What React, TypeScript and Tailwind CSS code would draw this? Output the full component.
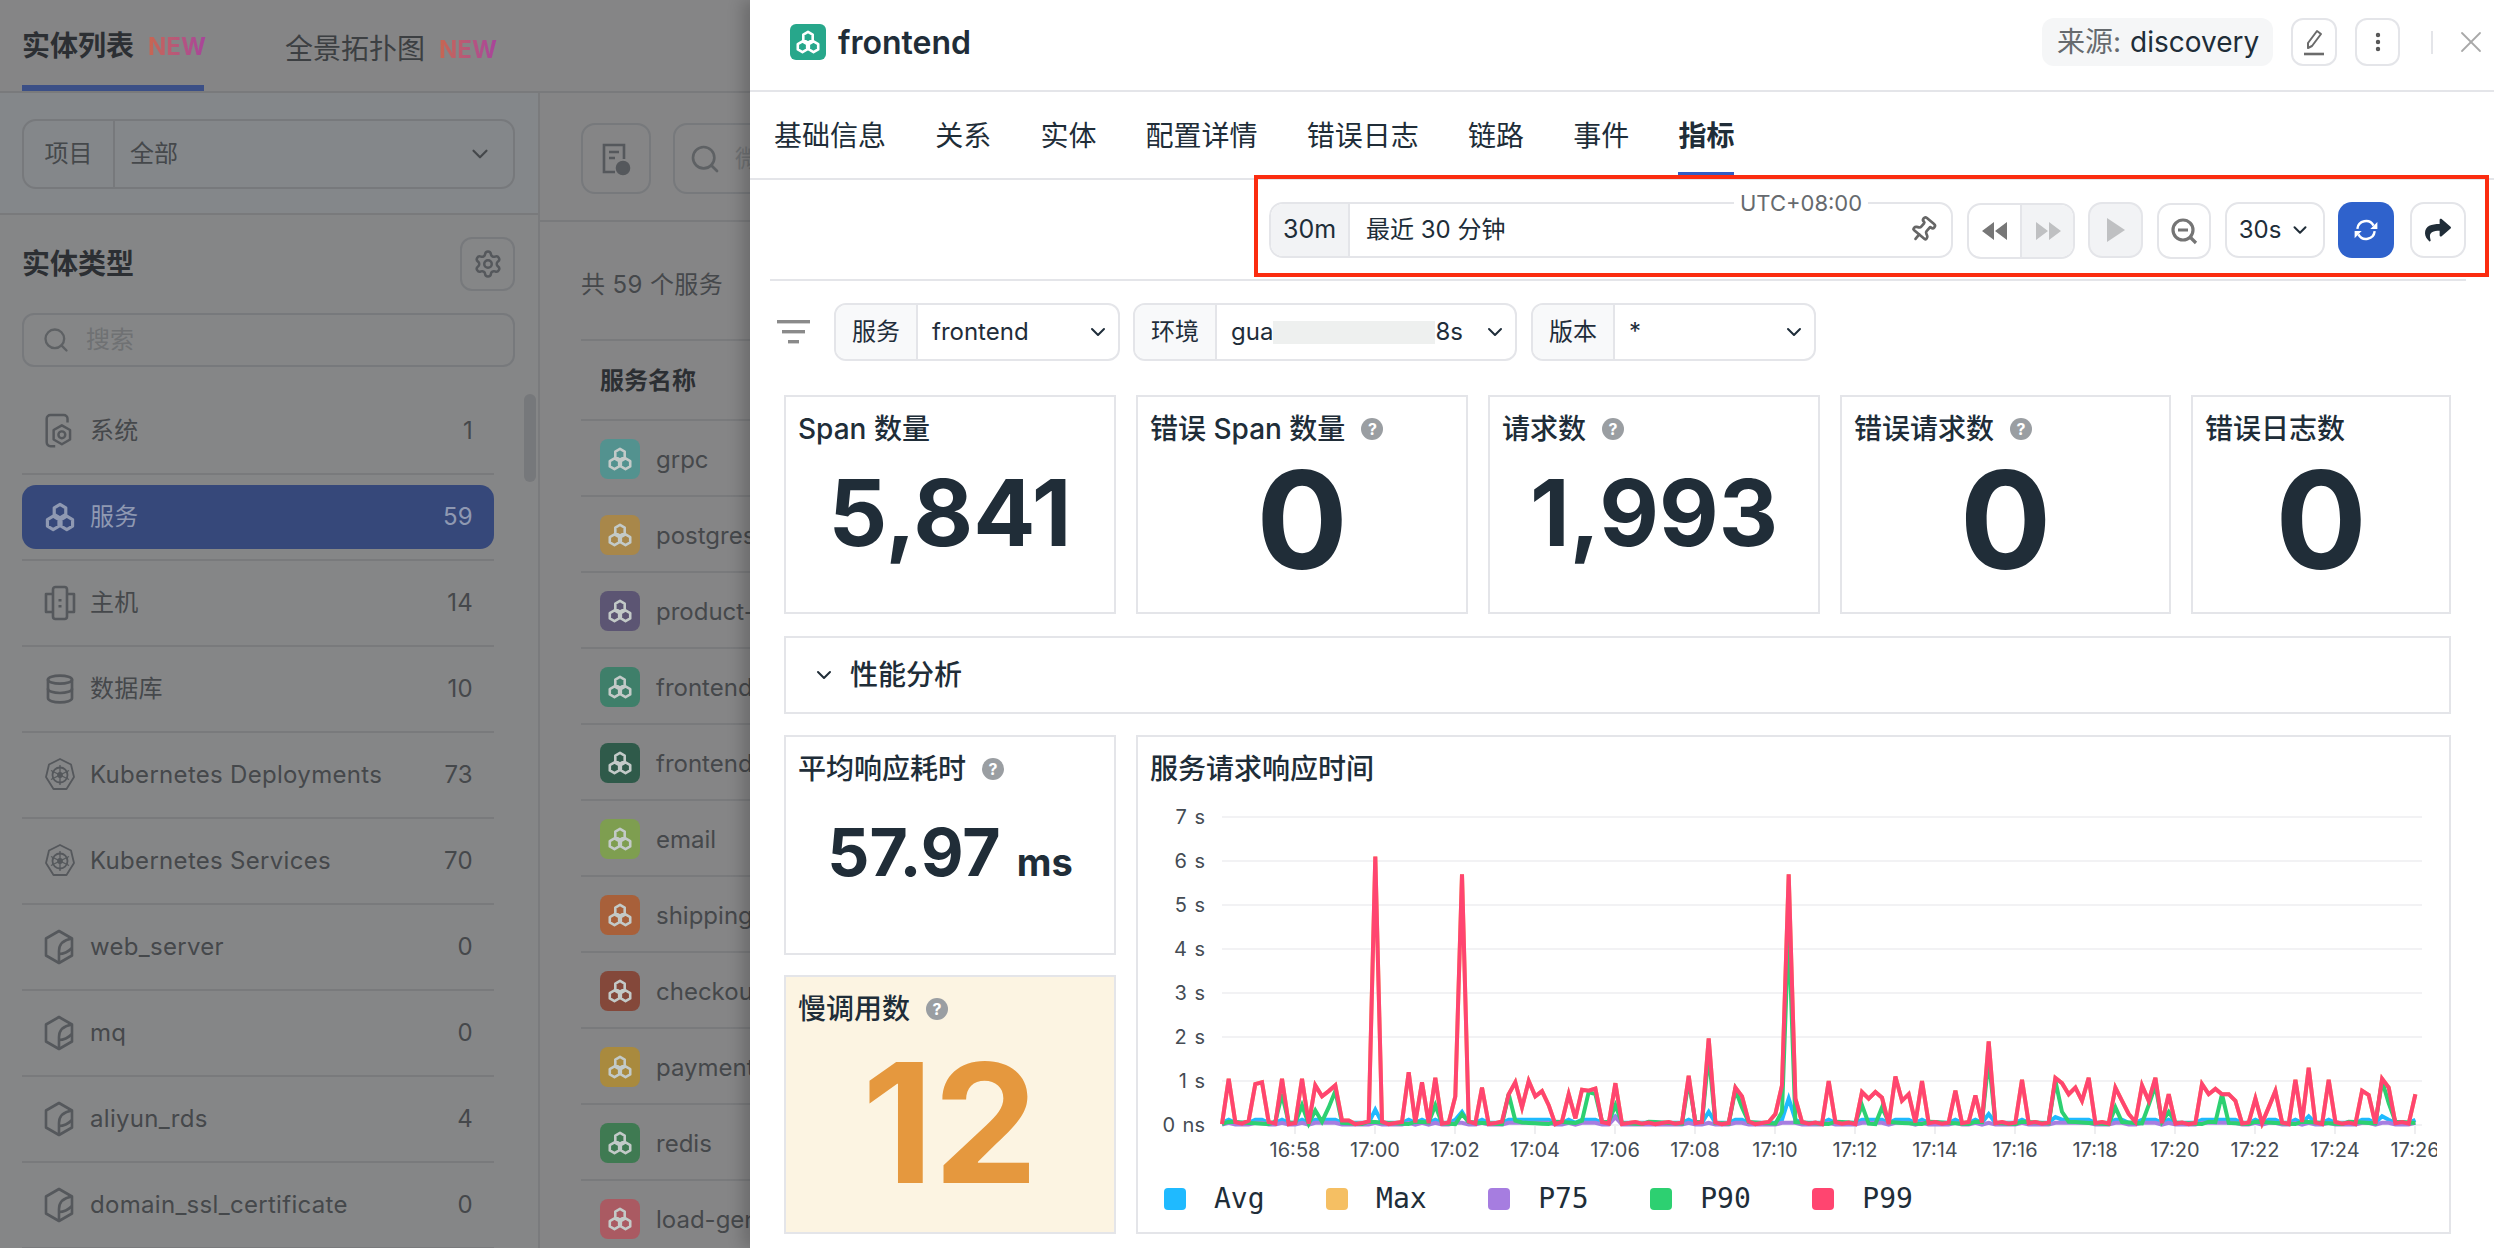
import { ChevronDown, Database, EllipsisVertical, Pin, Search, Settings, X } from "lucide-react";
import { FaShare } from "react-icons/fa";

const hex = (cx: number, cy: number, r: number) =>
    [0, 1, 2, 3, 4, 5]
        .map((i) => {
            const a = (Math.PI / 3) * i - Math.PI / 2;
            return `${(cx + r * Math.cos(a)).toFixed(2)},${(cy + r * Math.sin(a)).toFixed(2)}`;
        })
        .join(" ");

const ServiceGlyph = ({ className }: { className?: string }) => (
    <svg viewBox="0 0 24 24" fill="none" stroke="currentColor" strokeWidth="2.4" strokeLinejoin="round" className={className}>
        <polygon points={hex(12, 7.6, 5)} />
        <polygon points={hex(6.9, 16.4, 5)} />
        <polygon points={hex(17.1, 16.4, 5)} />
    </svg>
);

const SystemGlyph = () => (
    <svg viewBox="0 0 30 38" fill="none" stroke="currentColor" strokeWidth="2.6" strokeLinejoin="round" className="w-[30px] h-[36px]">
        <path d="M11 35H6a4 4 0 0 1-4-4V6a4 4 0 0 1 4-4h14a4 4 0 0 1 4 4v4" />
        <polygon points={hex(18, 23, 10)} />
        <circle cx="18" cy="23" r="3.6" />
    </svg>
);

const HostGlyph = () => (
    <svg viewBox="0 0 32 36" fill="none" stroke="currentColor" strokeWidth="2.6" strokeLinejoin="round" className="w-[32px] h-[36px]">
        <rect x="9" y="2" width="14" height="32" rx="2.5" />
        <path d="M9 9H2v18h7M23 9h7v18h-7" />
        <path d="M16 14v2.4M16 20v2.4" strokeWidth="3" />
    </svg>
);

const K8sGlyph = () => (
    <svg viewBox="0 0 32 36" fill="none" stroke="currentColor" strokeWidth="1.8" strokeLinejoin="round" className="w-[32px] h-[36px]">
        <polygon points="16,2 27,7.5 30,20 22.5,32 9.5,32 2,20 5,7.5" />
        <circle cx="16" cy="18" r="7.5" />
        <circle cx="16" cy="18" r="2" />
        <path d="M16 8v20M7 13.5l18 9M25 13.5l-18 9" strokeWidth="1.3" />
    </svg>
);

const CubeGlyph = () => (
    <svg viewBox="0 0 30 36" fill="none" stroke="currentColor" strokeWidth="2.6" strokeLinejoin="round" className="w-[30px] h-[36px]">
        <polygon points="15,2 28,9.5 28,26.5 15,34 2,26.5 2,9.5" />
        <path d="M28 9.5C19 11 15 16 15 22v12" />
        <path d="M15 25c5 0 9-2 13-6" />
    </svg>
);

const entityTypes: { name: string; count: number; icon: React.ReactNode; active?: boolean }[] = [
    { name: "系统", count: 1, icon: <SystemGlyph /> },
    { name: "服务", count: 59, icon: <ServiceGlyph className="w-[32px] h-[32px]" />, active: true },
    { name: "主机", count: 14, icon: <HostGlyph /> },
    { name: "数据库", count: 10, icon: <Database className="w-[32px] h-[32px]" strokeWidth={2} /> },
    { name: "Kubernetes Deployments", count: 73, icon: <K8sGlyph /> },
    { name: "Kubernetes Services", count: 70, icon: <K8sGlyph /> },
    { name: "web_server", count: 0, icon: <CubeGlyph /> },
    { name: "mq", count: 0, icon: <CubeGlyph /> },
    { name: "aliyun_rds", count: 4, icon: <CubeGlyph /> },
    { name: "domain_ssl_certificate", count: 0, icon: <CubeGlyph /> },
];

const services = [
    { name: "grpc", bg: "bg-[#53928f]" },
    { name: "postgres", bg: "bg-[#a8874a]" },
    { name: "product-catalog", bg: "bg-[#5c5573]" },
    { name: "frontend", bg: "bg-[#3f7f6a]" },
    { name: "frontend-web", bg: "bg-[#2f5a4a]" },
    { name: "email", bg: "bg-[#7e9e50]" },
    { name: "shipping", bg: "bg-[#a8603a]" },
    { name: "checkout", bg: "bg-[#84483a]" },
    { name: "payment", bg: "bg-[#a98a3e]" },
    { name: "redis", bg: "bg-[#3f7a52]" },
    { name: "load-generator", bg: "bg-[#aa5a62]" },
];

// chart data: 10s step, sparse, everything else sits near zero
const p99Peaks: Record<number, number> = {
    1: 1.05, 4: 0.1, 5: 0.93, 6: 0.97, 9: 1.05, 12: 1.05, 14: 0.9, 15: 0.65, 16: 0.77, 17: 0.9, 18: 0.1, 19: 0.1, 22: 0.08, 23: 6.1, 24: 0.08,
    28: 1.2, 30: 0.97, 32: 1.07, 35: 0.65, 36: 5.7, 37: 0.08, 39: 0.85, 42: 0.08, 43: 0.7, 44: 0.97, 45: 0.4, 46: 1, 47: 0.65, 48: 0.77, 49: 0.45,
    51: 0.08, 52: 0.7, 53: 0.15, 54: 0.8, 55: 0.78, 56: 0.83, 59: 0.95, 70: 1.12, 73: 1.97, 77: 0.85, 78: 0.65, 79: 0.08, 83: 0.25, 84: 0.9, 85: 5.7, 86: 0.6,
    91: 1, 96: 0.75, 97: 0.6, 98: 0.75, 99: 0.62, 101: 1.1, 102: 0.55, 103: 0.7, 105: 1, 110: 0.78, 113: 0.67, 115: 1.9, 120: 1.03,
    125: 1.07, 126: 0.95, 127: 0.7, 128: 0.85, 129: 0.55, 130: 1.07, 134: 0.85, 135: 0.55, 136: 0.25, 138: 0.9, 139: 0.55, 140: 1.07, 142: 0.7,
    147: 0.93, 148: 0.7, 149: 0.82, 150: 0.7, 151: 0.7, 152: 0.55, 155: 0.6, 157: 0.4, 158: 0.77, 161: 1.03, 163: 1.3, 166: 1.03,
    171: 0.78, 172: 0.68, 174: 1.05, 175: 0.85, 179: 0.7,
};
const p90Peaks: Record<number, number> = {
    9: 0.7, 12: 0.45, 14: 0.33, 16: 0.4, 17: 0.77, 32: 0.45, 36: 0.25, 43: 0.7, 44: 0.1, 54: 0.1, 55: 0.75, 56: 0.7, 59: 0.45,
    70: 1, 73: 1.6, 77: 0.8, 78: 0.4, 84: 0.3, 85: 4.5, 96: 0.45, 99: 0.4, 115: 1.5, 125: 1, 126: 0.3, 134: 0.4, 139: 0.45, 140: 0.9, 142: 0.3, 150: 0.7, 174: 1, 175: 0.5,
};
const avgPeaks: Record<number, number> = { 23: 0.35, 36: 0.3, 59: 0.2, 73: 0.3, 85: 0.6, 115: 0.25, 125: 0.18, 163: 0.2, 174: 0.2 };

const pointCount = Array.from({ length: 180 }, (_, i) => i);
const avgSeries = pointCount.map((i) => avgPeaks[i] ?? ((p99Peaks[i] ?? 0) > 0.3 ? 0.12 : 0.05));
const p75Series = pointCount.map((i) => (i === 59 ? 0.18 : (p99Peaks[i] ?? 0) > 0.3 ? 0.05 : 0.01));
const p90Series = pointCount.map((i) => p90Peaks[i] ?? 0.02 + ((i * 13) % 7) * 0.009);
const p99Series = pointCount.map((i) => p99Peaks[i] ?? 0.02 + ((i * 7) % 5) * 0.012);

const toPoints = (values: number[]) =>
    values.map((v, i) => `${(84 + i * 6.667).toFixed(1)},${(326 - v * 44).toFixed(1)}`).join(" ");

const xTicks = ["16:58", "17:00", "17:02", "17:04", "17:06", "17:08", "17:10", "17:12", "17:14", "17:16", "17:18", "17:20", "17:22", "17:24", "17:26"];
const yTicks = ["0 ns", "1 s", "2 s", "3 s", "4 s", "5 s", "6 s", "7 s"];

const legend = [
    { name: "Avg", color: "bg-[#1fbaff]" },
    { name: "Max", color: "bg-[#f5bf63]" },
    { name: "P75", color: "bg-[#a67de0]" },
    { name: "P90", color: "bg-[#2dd071]" },
    { name: "P99", color: "bg-[#ff4570]" },
];

const Help = () => (
    <span className="inline-flex items-center justify-center w-[22px] h-[22px] rounded-full bg-[#9a9ea2] text-white text-[16px] font-bold leading-none">?</span>
);

const ResponseChart = () => (
    <svg width="1299" height="370" className="block">
        {yTicks.map((t, i) => (
            <g key={t}>
                <line x1="84" x2="1284" y1={326 - i * 44} y2={326 - i * 44} stroke="#f2f2f4" strokeWidth="2" />
                <text x="67" y={326 - i * 44 + 7} textAnchor="end" fontSize="20" fill="#454c54" wordSpacing="2">{t}</text>
            </g>
        ))}
        {xTicks.map((t, i) => (
            <g key={t}>
                <line x1={157 + i * 80} x2={157 + i * 80} y1="327" y2="335" stroke="#eeeef0" strokeWidth="2" />
                <text x={157 + i * 80} y="358" textAnchor="middle" fontSize="20" fill="#454c54">{t}</text>
            </g>
        ))}
        <polyline points={toPoints(avgSeries)} fill="none" stroke="#1fbaff" strokeWidth="4" />
        <polyline points={toPoints(p99Series)} fill="none" stroke="#f5bf63" strokeWidth="4" />
        <polyline points={toPoints(p75Series)} fill="none" stroke="#a67de0" strokeWidth="4" />
        <polyline points={toPoints(p90Series)} fill="none" stroke="#2dd071" strokeWidth="4" />
        <polyline points={toPoints(p99Series)} fill="none" stroke="#ff4570" strokeWidth="4" />
    </svg>
);

const Select = ({ label, className, children }: { label: string; className: string; children: React.ReactNode }) => (
    <div className={`flex h-[58px] border-2 border-[#e4e5e9] rounded-[12px] overflow-hidden text-[24px] text-[#1f2d3a] ${className}`}>
        <div className="w-[82px] shrink-0 flex items-center justify-center bg-[#f8f9fa] border-r-2 border-[#e4e5e9]">{label}</div>
        <div className="flex-1 flex items-center justify-between pl-[14px] pr-[8px]">
            {children}
            <ChevronDown className="w-[24px] h-[24px]" strokeWidth={2} />
        </div>
    </div>
);

const StatCard = ({ title, value, help, size = "big" }: { title: string; value: string; help?: boolean; size?: "big" | "mid" }) => (
    <div className="h-[219px] border-2 border-[#e4e5e9] flex flex-col text-[#202d38]">
        <div className="flex items-center gap-[16px] pt-[13px] pl-[12px] text-[28px] leading-[38px] font-medium">
            {title}
            {help && <Help />}
        </div>
        {size === "big" ? (
            <div className="flex-1 flex items-center justify-center pb-[21px] text-[136px] leading-none font-bold">{value}</div>
        ) : (
            <div className="flex-1 flex items-center justify-center pb-[35px] text-[92px] leading-none font-bold">{value}</div>
        )}
    </div>
);

const IconBox = ({ className, children }: { className: string; children: React.ReactNode }) => (
    <div className={`h-[56px] flex items-center justify-center border-2 border-[#e4e5e9] rounded-[14px] ${className}`}>{children}</div>
);

const Backdrop = () => (
    <div className="w-[2494px] h-[1248px] bg-[#858586] text-[#45484b]">
        <div className="h-[93px] border-b-2 border-[#797a7c] flex">
            <div className="w-[182px] ml-[22px] flex items-center gap-[14px] border-b-[6px] border-[#3b4f86] pt-[6px] text-[28px] font-semibold text-[#2c2f33] whitespace-nowrap">
                实体列表
                <span className="pt-[2px] bg-linear-to-r from-[#c8664f] to-[#a8439b] bg-clip-text text-transparent text-[24px] font-bold">NEW</span>
            </div>
            <div className="ml-[81px] flex items-center gap-[14px] pt-[6px] text-[28px] whitespace-nowrap text-[#3c3f42]">
                全景拓扑图
                <span className="pt-[2px] bg-linear-to-r from-[#c8664f] to-[#a8439b] bg-clip-text text-transparent text-[24px] font-bold">NEW</span>
            </div>
        </div>
        <div className="flex h-[1155px]">
            <div className="relative w-[540px] shrink-0 border-r-2 border-[#7a7b7d] bg-[#84878a]">
                <div className="h-[122px] border-b-2 border-[#797a7c] pt-[26px] pl-[22px] pr-[23px]">
                    <div className="flex h-[70px] border-2 border-[#77797c] rounded-[14px] text-[24px]">
                        <div className="w-[91px] flex items-center justify-center border-r-2 border-[#77797c]">项目</div>
                        <div className="flex-1 flex items-center justify-between pl-[15px] pr-[20px]">
                            全部
                            <ChevronDown className="w-[26px] h-[26px]" strokeWidth={2} />
                        </div>
                    </div>
                </div>
                <div className="pl-[22px] pr-[23px] pt-[22px] bg-[#858687] h-[1033px] overflow-hidden">
                    <div className="flex items-center justify-between h-[54px]">
                        <span className="text-[28px] font-semibold text-[#2c2f33]">实体类型</span>
                        <div className="w-[55px] h-[54px] flex items-center justify-center border-2 border-[#77797c] rounded-[12px]">
                            <Settings className="w-[30px] h-[30px] text-[#55585c]" strokeWidth={2} />
                        </div>
                    </div>
                    <div className="mt-[22px] h-[54px] flex items-center gap-[16px] pl-[18px] border-2 border-[#77797c] rounded-[12px] text-[24px] text-[#6f7173]">
                        <Search className="w-[28px] h-[28px] text-[#5e6164]" strokeWidth={2} />
                        搜索
                    </div>
                    <div className="mt-[22px] w-[472px]">
                        {entityTypes.map((t) => (
                            <div key={t.name} className="h-[86px] border-b-2 border-[#797a7c] flex items-center">
                                <div className={`w-full h-[64px] flex items-center rounded-[14px] pl-[22px] pr-[21px] text-[24px] tracking-[0.3px] ${t.active ? "bg-[#36487a] text-[#8f99b2]" : "text-[#45484b]"}`}>
                                    <span className={`w-[46px] flex ${t.active ? "text-[#8f99b2]" : "text-[#55585c]"}`}>{t.icon}</span>
                                    <span className="flex-1">{t.name}</span>
                                    <span>{t.count}</span>
                                </div>
                            </div>
                        ))}
                    </div>
                </div>
                <div className="absolute left-[524px] top-[301px] w-[12px] h-[88px] rounded-full bg-[#76787b]" />
            </div>
            <div className="w-[211px] overflow-hidden">
                <div className="h-[129px] border-b-2 border-[#797a7c] pt-[30px] pl-[41px] flex gap-[22px]">
                    <div className="w-[70px] h-[71px] shrink-0 flex items-center justify-center border-2 border-[#77797c] rounded-[14px]">
                        <svg viewBox="0 0 30 34" fill="none" stroke="#55585c" strokeWidth="2.6" className="w-[30px] h-[34px]">
                            <path d="M14 30H3V3h20v14" />
                            <path d="M8 10h10M8 16h6" />
                            <circle cx="22" cy="26" r="6" fill="#55585c" />
                        </svg>
                    </div>
                    <div className="w-[400px] h-[71px] shrink-0 flex items-center gap-[14px] pl-[14px] border-2 border-[#77797c] rounded-[14px] text-[24px] text-[#6f7173] whitespace-nowrap">
                        <Search className="w-[32px] h-[32px] text-[#5e6164]" strokeWidth={2} />
                        微服务名称
                    </div>
                </div>
                <div className="pl-[41px] w-[500px]">
                    <div className="h-[119px] border-b-2 border-[#797a7c] flex items-center pt-[9px] text-[24px] tracking-[0.4px]">共 59 个服务</div>
                    <div className="h-[80px] border-b-2 border-[#797a7c] flex items-center pl-[19px] pt-[2px] text-[24px] font-semibold text-[#2c2f33]">服务名称</div>
                    {services.map((s) => (
                        <div key={s.name} className="h-[76px] border-b-2 border-[#797a7c] flex items-center gap-[16px] pl-[19px] pt-[2px] text-[24px] whitespace-nowrap">
                            <span className={`w-[40px] h-[40px] rounded-[8px] flex items-center justify-center text-[#c3cac8] ${s.bg}`}>
                                <ServiceGlyph className="w-[26px] h-[26px]" />
                            </span>
                            <span className="pt-[2px]">{s.name}</span>
                        </div>
                    ))}
                </div>
            </div>
        </div>
    </div>
);

const tabs = ["基础信息", "关系", "实体", "配置详情", "错误日志", "链路", "事件", "指标"];

const Drawer = () => (
    <div className="absolute left-[750px] top-0 w-[1744px] h-[1248px] bg-white overflow-hidden shadow-[-8px_0_14px_rgba(0,0,0,0.18)] text-[#202d38]">
        <div className="h-[92px] pb-[6px] border-b-2 border-[#e4e5e9] flex items-center pl-[40px] pr-[5px]">
            <span className="w-[36px] h-[36px] rounded-[6px] bg-[#27a78b] text-white flex items-center justify-center">
                <ServiceGlyph className="w-[26px] h-[26px]" />
            </span>
            <span className="ml-[12px] pt-[2px] text-[32px] font-semibold">frontend</span>
            <div className="ml-auto w-[231px] h-[48px] rounded-[12px] bg-[#f5f6f7] flex items-center pl-[15px] whitespace-nowrap">
                <span className="text-[#666a6e] text-[28px]">来源:</span>
                <span className="ml-[9px] text-[28px]">discovery</span>
            </div>
            <div className="ml-[18px] w-[46px] h-[48px] flex items-center justify-center border-2 border-[#e4e5e9] rounded-[12px]">
                <svg viewBox="0 0 24 28" fill="none" stroke="#6b6b6b" strokeWidth="2" strokeLinejoin="round" className="w-[24px] h-[28px]">
                    <path d="M6 20V15L15 3l4 3-9 12z" />
                    <path d="M2 26h20" strokeWidth="2.6" />
                </svg>
            </div>
            <div className="ml-[18px] w-[45px] h-[48px] flex items-center justify-center border-2 border-[#e4e5e9] rounded-[12px]">
                <EllipsisVertical className="w-[24px] h-[24px] text-[#555]" strokeWidth={2.4} />
            </div>
            <div className="ml-[31px] w-[2px] h-[23px] bg-[#e4e5e9]" />
            <X className="ml-[20px] w-[36px] h-[36px] text-[#a8a8a8]" strokeWidth={1.2} />
        </div>

        <div className="h-[88px] border-b-2 border-[#e4e5e9] flex pl-[24px] gap-[49.2px] text-[28px]">
            {tabs.map((t) => (
                <div key={t} className={`flex items-center pt-[8px] border-b-[6px] ${t === "指标" ? "border-[#2f5cc4] font-semibold" : "border-transparent"}`}>{t}</div>
            ))}
        </div>

        <div className="ml-[20px] mr-[28px] h-[101px] border-b-2 border-[#e4e5e9] pt-[22px] flex justify-end gap-[14px]">
            <div className="relative w-[684px] h-[56px] flex border-2 border-[#e4e5e9] rounded-[14px] text-[24px]">
                <div className="w-[79px] flex items-center justify-center bg-[#f2f3f5] border-r-2 border-[#e4e5e9] rounded-l-[12px] text-[25px]">30m</div>
                <div className="flex-1 flex items-center justify-between pl-[16px] pr-[14px]">
                    最近 30 分钟
                    <Pin className="w-[28px] h-[28px] rotate-[40deg] text-[#666]" strokeWidth={2.3} />
                </div>
                <span className="absolute left-[463px] top-[-14px] bg-white px-[6px] text-[22px] leading-[26px] text-[#666a6e]">UTC+08:00</span>
            </div>
            <div className="w-[108px] h-[56px] mt-[1px] flex border-2 border-[#e4e5e9] rounded-[14px] overflow-hidden">
                <div className="flex-1 flex items-center justify-center border-r-2 border-[#e4e5e9]">
                    <svg viewBox="0 0 26 18" fill="#777" className="w-[26px] h-[18px]"><path d="M12 0v18L0 9zM25 0v18L13 9z" /></svg>
                </div>
                <div className="flex-1 flex items-center justify-center bg-[#f2f3f5]">
                    <svg viewBox="0 0 26 18" fill="#bfc0c2" className="w-[26px] h-[18px]"><path d="M1 0v18l12-9zM14 0v18l12-9z" /></svg>
                </div>
            </div>
            <IconBox className="w-[55px] -ml-[1px] bg-[#f2f3f5]">
                <svg viewBox="0 0 18 24" fill="#bfc0c2" className="w-[18px] h-[24px]"><path d="M0 0v24l18-12z" /></svg>
            </IconBox>
            <IconBox className="w-[54px] mt-[1px]">
                <svg viewBox="0 0 28 28" fill="none" stroke="#757575" strokeWidth="3.2" className="w-[28px] h-[28px]">
                    <circle cx="13" cy="13" r="10" />
                    <path d="M8 13h10M20 20l6 6" />
                </svg>
            </IconBox>
            <IconBox className="w-[100px] gap-[8px] text-[24px]">
                30s
                <ChevronDown className="w-[22px] h-[22px]" strokeWidth={2.2} />
            </IconBox>
            <div className="w-[56px] h-[56px] -ml-[1px] flex items-center justify-center rounded-[14px] bg-[#2f62cc]">
                <svg viewBox="0 0 24 24" fill="none" stroke="#fff" strokeWidth="2.2" className="w-[26px] h-[26px]">
                    <path d="M4 11a8 8 0 0 1 15-3" />
                    <path d="M20 13a8 8 0 0 1-15 3" />
                    <polygon points="22.5,4.5 22.5,11 16,11" fill="#fff" stroke="none" />
                    <polygon points="1.5,19.5 1.5,13 8,13" fill="#fff" stroke="none" />
                </svg>
            </div>
            <IconBox className="w-[56px] ml-[2px]">
                <FaShare className="w-[26px] h-[26px] text-[#202d38]" />
            </IconBox>
        </div>

        <div className="mt-[22px] pl-[27px] flex items-center">
            <svg viewBox="0 0 33 24" fill="#8a8a8a" className="w-[33px] h-[24px] mr-[24px]">
                <rect x="0" y="0" width="33" height="3.4" />
                <rect x="5" y="10" width="23" height="3.4" />
                <rect x="11" y="20" width="11" height="3.4" />
            </svg>
            <Select label="服务" className="w-[286px]">frontend</Select>
            <Select label="环境" className="w-[384px] ml-[13px]">
                <span className="flex items-center">
                    gua
                    <span className="w-[162px] h-[23px] bg-[#eef0ef]" />
                    8s
                </span>
            </Select>
            <Select label="版本" className="w-[285px] ml-[14px]">*</Select>
        </div>

        <div className="ml-[34px] w-[1667px]">
            <div className="mt-[34px] grid grid-cols-[332px_332px_332px_331px_1fr] gap-[20px]">
                <StatCard title="Span 数量" value="5,841" size="mid" />
                <StatCard title="错误 Span 数量" value="0" help />
                <StatCard title="请求数" value="1,993" help size="mid" />
                <StatCard title="错误请求数" value="0" help />
                <StatCard title="错误日志数" value="0" />
            </div>

            <div className="mt-[22px] h-[78px] border-2 border-[#e4e5e9] flex items-center pl-[26px] gap-[14px] text-[28px] font-medium">
                <ChevronDown className="w-[24px] h-[24px]" strokeWidth={2} />
                性能分析
            </div>

            <div className="mt-[21px] grid grid-cols-[332px_1fr] gap-[20px] h-[499px]">
                <div className="flex flex-col gap-[20px]">
                    <div className="h-[220px] border-2 border-[#e4e5e9] flex flex-col">
                        <div className="flex items-center gap-[16px] pt-[13px] pl-[12px] text-[28px] leading-[38px] font-medium">
                            平均响应耗时
                            <Help />
                        </div>
                        <div className="flex-1 flex items-baseline justify-center pt-[24px] font-bold">
                            <span className="text-[66px] leading-[80px]">57.97</span>
                            <span className="ml-[16px] text-[38px] leading-[80px]">ms</span>
                        </div>
                    </div>
                    <div className="flex-1 border-2 border-[#e4e5e9] bg-[#fcf4e2] flex flex-col">
                        <div className="flex items-center gap-[16px] pt-[13px] pl-[12px] text-[28px] leading-[38px] font-medium">
                            慢调用数
                            <Help />
                        </div>
                        <div className="flex-1 flex items-center justify-center pb-[15px] text-[166px] leading-none font-bold text-[#e5983e]">12</div>
                    </div>
                </div>
                <div className="border-2 border-[#e4e5e9]">
                    <div className="pt-[13px] pl-[12px] text-[28px] leading-[38px] font-medium">服务请求响应时间</div>
                    <div className="mt-[11px]">
                        <ResponseChart />
                    </div>
                    <div className="mt-[12px] pl-[26px] flex items-center gap-[61.5px] font-['DejaVu_Sans_Mono',monospace] text-[28px] leading-[36px]">
                        {legend.map((l) => (
                            <div key={l.name} className="flex items-center gap-[28px]">
                                <span className={`w-[22px] h-[22px] rounded-[4px] ${l.color}`} />
                                {l.name}
                            </div>
                        ))}
                    </div>
                </div>
            </div>
        </div>
    </div>
);

const App = () => {
    return (
        <div className="relative w-[2494px] h-[1248px] overflow-hidden font-['Inter','Noto_Sans_CJK_SC',sans-serif]">
            <Backdrop />
            <Drawer />
            {/* red highlight box drawn over the toolbar */}
            <div className="absolute left-[1254px] top-[175px] w-[1235px] h-[102px] border-[4px] border-[#fb2c10] pointer-events-none" />
        </div>
    );
};

export default App;
